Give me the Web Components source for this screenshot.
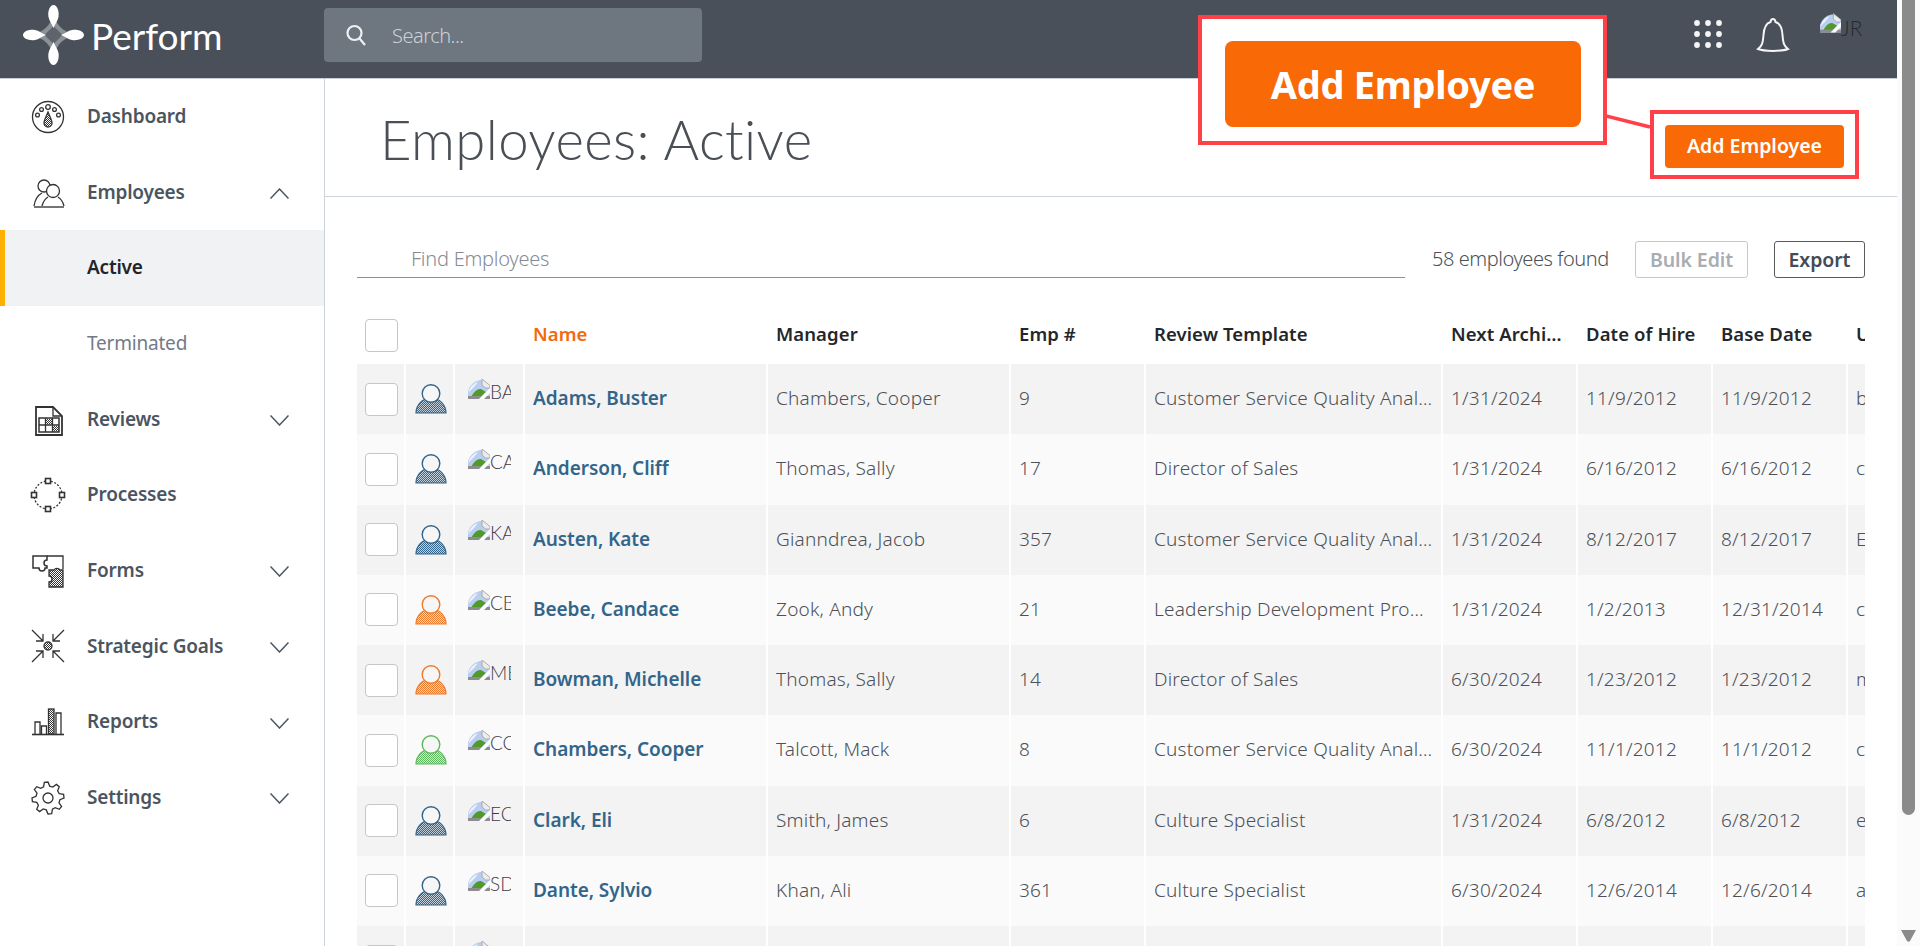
<!DOCTYPE html>
<html lang="en">
<head>
<meta charset="utf-8">
<title>Perform - Employees</title>
<style>
  html, body { margin: 0; height: 946px; overflow: hidden; background: #fff; }
  body { font-family: "Noto Sans", "Open Sans", sans-serif; }
</style>
</head>
<body>
<perform-app></perform-app>
<script>
const gearPath = (cx, cy, rOut, rIn, teeth) => {
  let d = '';
  const step = Math.PI * 2 / teeth;
  for (let i = 0; i < teeth; i++) {
    const a = i * step - step / 2;
    const pts = [[rIn, a + step * 0.02], [rOut, a + step * 0.2], [rOut, a + step * 0.5], [rIn, a + step * 0.68]];
    pts.forEach(([r, t], j) => {
      const x = (cx + r * Math.cos(t)).toFixed(1);
      const y = (cy + r * Math.sin(t)).toFixed(1);
      d += (i === 0 && j === 0 ? 'M' : 'L') + x + ' ' + y + ' ';
    });
  }
  return d + 'Z';
};

// stroke="none" on the pattern cells: they would inherit the icon's stroke otherwise
const dither = (id, color) => `<defs><pattern id="${id}" width="2" height="2" patternUnits="userSpaceOnUse"><rect width="1" height="1" fill="${color}" stroke="none"/><rect x="1" y="1" width="1" height="1" fill="${color}" stroke="none"/></pattern></defs>`;

const NAV_ICONS = {
  dashboard: `${dither('d', '#333')}
    <circle cx="18" cy="18" r="15.5"/>
    <circle cx="18" cy="8" r="2.3"/><circle cx="11.5" cy="10.5" r="1.9"/><circle cx="24.5" cy="10.5" r="1.9"/>
    <circle cx="7.5" cy="16" r="1.9"/><circle cx="28.5" cy="16" r="1.9"/>
    <path d="M18 13 C20 18 22 21 22 24 A4 4 0 0 1 14 24 C14 21 16 18 18 13Z" fill="url(#d)"/>`,
  employees: `
    <circle cx="14" cy="11" r="6"/><circle cx="23" cy="16" r="6.500" fill="#fff"/>
    <path d="M4 31 C5 25 8 20 12 18"/>
    <path d="M12 31 C13 27 15 24 18 22 M28 22 C31 24 33 27 34 31"/>
    <path d="M4 32 H34" stroke-width="1.800" stroke="#666"/>`,
  reviews: `${dither('r', '#333')}
    <g transform="translate(1 1)">
    <path d="M5 4 H22 L31 13 V32 H5Z" stroke-width="1.800"/>
    <path d="M22 4 V13 H31"/>
    <path d="M8 15 H28 V29 H8Z" stroke-width="1.500"/>
    <path d="M8 22 H28 M14.500 15 V29 M21.500 15 V29"/>
    <rect x="15" y="16" width="6" height="5.500" fill="url(#r)" stroke="none"/>
    <rect x="22" y="23" width="6" height="5.500" fill="url(#r)" stroke="none"/>
    </g>`,
  processes: `
    <circle cx="18" cy="18" r="14" stroke-dasharray="2 1.600"/>
    <rect x="15.500" y="1.500" width="5" height="5" fill="#fff" stroke-width="1.600"/>
    <rect x="15.500" y="29.500" width="5" height="5" fill="#fff" stroke-width="1.600"/>
    <rect x="1.500" y="15.500" width="5" height="5" fill="#fff" stroke-width="1.600"/>
    <rect x="29.500" y="15.500" width="5" height="5" fill="#fff" stroke-width="1.600"/>`,
  forms: `${dither('f', '#333')}
    <path d="M3 3 H17 V7 A3 3 0 0 0 17 13 V15 H15 A3 3 0 0 1 9 15 H3Z" stroke-width="1.500"/>
    <path d="M20 3 H33 V16 M17 3 H20"/>
    <path d="M19 17 H24 A3.500 3.500 0 0 1 30 17 H33 V34 H19 V29 A3 3 0 0 0 19 23Z" fill="url(#f)" stroke-width="1.300"/>`,
  goals: `${dither('g', '#333')}
    <g transform="translate(0 -1)">
    <circle cx="18" cy="18" r="4" fill="url(#g)"/>
    <path d="M2 2 L13 13 M13 6 V13 H6 M34 2 L23 13 M23 6 V13 H30 M2 34 L13 23 M6 23 H13 V30 M34 34 L23 23 M30 23 H23 V30"/>
    </g>`,
  reports: `${dither('b', '#333')}
    <path d="M5 30 V18 H10 V30 M11.500 30 V22 H16.500 V30 M26 30 V9 H31 V30"/>
    <rect x="18.500" y="5" width="5.500" height="25" fill="url(#b)"/>
    <path d="M2 30.500 H34" stroke-width="1.600"/>`,
  settings: `<path d="${gearPath(18, 18, 16, 12, 8)}"/><circle cx="18" cy="18" r="5"/>`
};

class AppHeader extends HTMLElement {
  constructor() {
    super();
    this.attachShadow({ mode: 'open' });
  }

  connectedCallback() {
    this.shadowRoot.innerHTML = `
      <style>
        :host { display: flex; align-items: flex-start; height: 79px; box-sizing: border-box; background: #4a5059; border-bottom: 1px solid #c9ced6; position: relative; }
        .logo { display: flex; align-items: center; width: 324px; height: 70px; flex: none; box-sizing: border-box; padding-left: 23px; }
        .logo svg { width: 61px; height: 62px; flex: none; }
        .word { font: 400 37px Lato, sans-serif; color: #fff; margin-left: 7px; }
        .search { width: 378px; height: 54px; margin-top: 8px; background: #6e7780; border-radius: 4px; display: flex; align-items: center; padding-left: 22px; box-sizing: border-box; }
        .search svg { width: 21px; height: 22px; margin-right: 25px; }
        .search span { font: 300 20px "Noto Sans", sans-serif; letter-spacing: -.5px; color: #ccd0d5; }
        .right { margin-left: auto; display: flex; align-items: flex-start; padding-right: 33px; height: 78px; }
        .dots { width: 33px; height: 33px; margin-top: 18px; margin-right: 31px; }
        .bell { width: 34px; height: 36px; margin-top: 17px; margin-right: 30px; }
        .avatar { display: flex; width: 44px; margin-top: 13px; height: 30px; color: #26292d; font: 300 21px Lato, sans-serif; line-height: 30px; }
        broken-img { width: 21px; height: 20px; flex: none; }
      </style>
      <div class="logo">
        <svg viewBox="0 0 61 62">
          <path d="M30.500 9 Q34 27 53 31 Q34 35 30.500 53 Q27 35 8 31 Q27 27 30.500 9Z" fill="#8c9198"/>
          <path d="M30.500 22 L39.500 31 L30.500 40 L21.500 31Z" fill="#5d646c"/>
          <g fill="#fff">
            <path d="M30.500 1 C34 1 36.500 7 35.500 13 C34.800 17 32 20 30.500 24 C29 20 26.200 17 25.500 13 C24.500 7 27 1 30.500 1Z"/>
            <path d="M30.500 61 C34 61 36.500 55 35.500 49 C34.800 45 32 42 30.500 38 C29 42 26.200 45 25.500 49 C24.500 55 27 61 30.500 61Z"/>
            <path d="M0 31 C0 27.500 6 25 12 26 C16 26.700 19 29.500 23 31 C19 32.500 16 35.300 12 36 C6 37 0 34.500 0 31Z"/>
            <path d="M61 31 C61 27.500 55 25 49 26 C45 26.700 42 29.500 38 31 C42 32.500 45 35.300 49 36 C55 37 61 34.500 61 31Z"/>
          </g>
        </svg>
        <span class="word">Perform</span>
      </div>
      <div class="search">
        <svg viewBox="0 0 21 22" fill="none" stroke="#eef0f2" stroke-width="2.200"><circle cx="8.500" cy="9" r="7"/><path d="M13.500 14.500 L19 21"/></svg>
        <span>Search...</span>
      </div>
      <div class="right">
        <svg class="dots" viewBox="0 0 33 33" fill="#f4f5f6">
          ${[5, 16, 27].map(y => [5, 16, 27].map(x => `<circle cx="${x}" cy="${y}" r="2.900"/>`).join('')).join('')}
        </svg>
        <svg class="bell" viewBox="0 0 34 36" fill="none" stroke="#f4f5f6" stroke-width="2">
          <path d="M2 32 C6 29 7 26 7.500 18 C8 10 11 6 14.500 5 C15 1 19 1 19.500 5 C23 6 26 10 26.500 18 C27 26 28 29 32 32 C26 34.500 8 34.500 2 32Z"/>
        </svg>
        <div class="avatar"><broken-img></broken-img><span>JR</span></div>
      </div>
    `;
  }
}

class BrokenImg extends HTMLElement {
  constructor() {
    super();
    this.attachShadow({ mode: 'open' });
  }

  connectedCallback() {
    this.shadowRoot.innerHTML = `
      <style>
        :host { display: inline-block; line-height: 0; }
        svg { width: 100%; height: 100%; display: block; }
      </style>
      <svg viewBox="0 0 22 20">
        <path d="M0 20 V12 Q3 3 12 1 H15 L22 7 V20Z" fill="#b9cdf0"/>
        <path d="M0 14 Q3 5 10 3 L6 8 Z" fill="#eef3fb"/>
        <path d="M14 0 L22 6.500 V9 H17.500 L14 6Z" fill="#ececec" stroke="#9d9d9d" stroke-width=".8"/>
        <path d="M3 18 Q8 9 13 10 L18 13 L13 18Z" fill="#4f9a2a"/>
        <path d="M0 17 H22 V20 H0Z" fill="#8d8d8d"/>
        <path d="M22 9 L11 20 H16 L22 14Z" fill="#fff"/>
      </svg>
    `;
  }
}

class NavItem extends HTMLElement {
  constructor() {
    super();
    this.attachShadow({ mode: 'open' });
  }

  connectedCallback() {
    const icon = this.getAttribute('icon');
    const chevron = this.getAttribute('chevron');
    this.shadowRoot.innerHTML = `
      <style>
        :host { display: flex; align-items: center; height: 75.700px; box-sizing: border-box; padding: 0 0 2px 30px; position: relative;
                font: 600 19px "Noto Sans", sans-serif; letter-spacing: -.2px; color: #4b5560; }
        :host([active]) { background: #f1f2f4; color: #20252a; border-left: 5px solid #ffb000; padding-left: 25px; }
        :host([muted]) { color: #717b87; font-weight: 400; }
        .ico { width: 36px; height: 36px; flex: none; margin: 2px 21px 0 0; fill: none; stroke: #333; stroke-width: 1.300; }
        .spacer { width: 36px; flex: none; margin-right: 21px; }
        .chev { position: absolute; left: 270px; top: 33px; width: 19px; height: 11px; fill: none; stroke: #4b5560; stroke-width: 1.500; }
      </style>
      ${icon ? `<svg class="ico" viewBox="0 0 36 36">${NAV_ICONS[icon]}</svg>` : '<span class="spacer"></span>'}
      <slot></slot>
      ${chevron ? `<svg class="chev" viewBox="0 0 19 11"><path d="${chevron === 'up' ? 'M.5 10.500 L9.500 1 L18.500 10.500' : 'M.5 .5 L9.500 10 L18.500 .5'}"/></svg>` : ''}
    `;
  }
}

class SideNav extends HTMLElement {
  constructor() {
    super();
    this.attachShadow({ mode: 'open' });
  }

  connectedCallback() {
    this.shadowRoot.innerHTML = `
      <style>
        :host { display: block; width: 325px; flex: none; box-sizing: border-box; border-right: 1px solid #cdd3dd; background: #fff; }
      </style>
      <nav-item icon="dashboard">Dashboard</nav-item>
      <nav-item icon="employees" chevron="up">Employees</nav-item>
      <nav-item active>Active</nav-item>
      <nav-item muted>Terminated</nav-item>
      <nav-item icon="reviews" chevron="down">Reviews</nav-item>
      <nav-item icon="processes">Processes</nav-item>
      <nav-item icon="forms" chevron="down">Forms</nav-item>
      <nav-item icon="goals" chevron="down">Strategic Goals</nav-item>
      <nav-item icon="reports" chevron="down">Reports</nav-item>
      <nav-item icon="settings" chevron="down">Settings</nav-item>
    `;
  }
}

class PageHead extends HTMLElement {
  constructor() {
    super();
    this.attachShadow({ mode: 'open' });
  }

  connectedCallback() {
    this.shadowRoot.innerHTML = `
      <style>
        :host { display: flex; align-items: center; height: 118px; box-sizing: border-box; border-bottom: 1px solid #cdd3dd; padding: 0 53px 0 55px; }
        h1 { margin: 2px 0 0; font: 300 54.500px Lato, sans-serif; color: #4a4f55; letter-spacing: .4px; }
        button { margin-left: auto; margin-top: 17px; width: 179px; height: 43px; border: 0; border-radius: 4px; background: #f96a06; color: #fff; font: 600 19.500px "Noto Sans", sans-serif; padding: 0 0 2px; }
      </style>
      <h1>Employees: Active</h1>
      <button>Add Employee</button>
    `;
  }
}

class EmpToolbar extends HTMLElement {
  constructor() {
    super();
    this.attachShadow({ mode: 'open' });
  }

  connectedCallback() {
    this.shadowRoot.innerHTML = `
      <style>
        :host { display: flex; align-items: flex-start; height: 82px; box-sizing: border-box; padding: 44px 32px 0; font: 300 20px "Noto Sans", sans-serif; }
        .find { width: 1048px; height: 37px; box-sizing: border-box; border-bottom: 1px solid #8f8f8f; padding-left: 54px; color: #868c93; line-height: 36px; flex: none; letter-spacing: -.25px; }
        .count { margin-left: 27px; color: #4c5159; line-height: 36px; width: 203px; flex: none; white-space: nowrap; letter-spacing: -.45px; }
        button { height: 37px; box-sizing: border-box; background: #fff; border-radius: 3px; font: 600 19.500px "Noto Sans", sans-serif; letter-spacing: -.1px; padding: 0; }
        .bulk { width: 113px; border: 1px solid #c8c8c8; color: #a9adb2; margin-right: 26px; }
        .export { width: 91px; border: 1px solid #5a5a5a; color: #454b52; }
      </style>
      <div class="find">Find Employees</div>
      <div class="count">58 employees found</div>
      <button class="bulk">Bulk Edit</button>
      <button class="export">Export</button>
    `;
  }
}

class PersonIcon extends HTMLElement {
  constructor() {
    super();
    this.attachShadow({ mode: 'open' });
  }

  connectedCallback() {
    const color = this.getAttribute('color') || '#33658a';
    this.shadowRoot.innerHTML = `
      <style>
        :host { display: block; width: 32px; height: 30px; line-height: 0; }
      </style>
      <svg width="32" height="30" viewBox="0 0 32 30">
        ${dither('p', color)}
        <path d="M1 29 A15 15 0 0 1 31 29Z" fill="${color}" fill-opacity=".25"/>
        <path d="M1 29 A15 15 0 0 1 31 29Z" fill="url(#p)" stroke="${color}" stroke-width="1.200"/>
        <circle cx="16" cy="9.500" r="8.800" fill="#f6f6f6" stroke="${color}" stroke-width="1.400"/>
      </svg>
    `;
  }
}

class EmpRow extends HTMLElement {
  constructor() {
    super();
    this.attachShadow({ mode: 'open' });
  }

  setRow(row) {
    this.row = row;
    this.render();
  }

  render() {
    const r = this.row;
    this.shadowRoot.innerHTML = `
      <style>
        :host { display: grid; grid-template-columns: var(--cols); height: 70.250px; background: var(--row-bg); font: 300 19px "Noto Sans", sans-serif; letter-spacing: .2px; color: #4c5057; }
        .c { box-sizing: border-box; border-right: 2px solid #fff; padding: 0 8px 2px; display: flex; align-items: center; min-width: 0; overflow: hidden; white-space: nowrap; }
        .c span { overflow: hidden; text-overflow: ellipsis; }
        .c:last-child { border-right: 0; padding-right: 0; }
        .c.box { padding-bottom: 0; }
        .chk { width: 33px; height: 33px; box-sizing: border-box; border: 1px solid #c6c6c6; border-radius: 4px; background: #fff; flex: none; }
        .name { font-weight: 600; color: #33658a; letter-spacing: -.05px; }
        .pic { padding: 15px 0 0 13px; align-items: flex-start; }
        .alt { width: 43px; height: 30px; overflow: hidden; display: flex; font: 300 19px Lato, sans-serif; color: #3f3a4a; line-height: 26px; letter-spacing: 0; }
        broken-img { width: 22px; height: 20px; flex: none; }
        .person { padding: 20px 0 0 9px; align-items: flex-start; }
      </style>
      <div class="c box"><div class="chk"></div></div>
      <div class="c person"><person-icon color="${r.color}"></person-icon></div>
      <div class="c pic"><div class="alt"><broken-img></broken-img>${r.initials}</div></div>
      <div class="c name"><span>${r.name}</span></div>
      <div class="c"><span>${r.manager}</span></div>
      <div class="c"><span>${r.emp}</span></div>
      <div class="c"><span>${r.template}</span></div>
      <div class="c"><span>${r.archive}</span></div>
      <div class="c"><span>${r.hire}</span></div>
      <div class="c"><span>${r.base}</span></div>
      <div class="c"><span style="text-overflow:clip">${r.user}</span></div>
    `;
  }
}

class EmpTable extends HTMLElement {
  constructor() {
    super();
    this.attachShadow({ mode: 'open' });
    this.rows = [];
  }

  connectedCallback() {
    this.render();
  }

  setRows(rows) {
    this.rows = rows;
    this.render();
  }

  render() {
    this.shadowRoot.innerHTML = `
      <style>
        :host { display: block; margin: 0 32px; --cols: 49px 49px 70px 243px 243px 135px 297px 135px 135px 135px 1fr; font: 600 18.500px "Noto Sans", sans-serif; letter-spacing: .1px; color: #23272b; }
        .head { display: grid; grid-template-columns: var(--cols); height: 85px; box-sizing: border-box; padding-top: 40px; }
        .head div { padding: 0 8px; height: 33px; line-height: 29px; white-space: nowrap; overflow: hidden; text-overflow: ellipsis; min-width: 0; }
        .head div:last-child { padding-right: 0; text-overflow: clip; }
        .head .sel { padding: 0; }
        .chk { width: 33px; height: 33px; box-sizing: border-box; border: 1px solid #c6c6c6; border-radius: 4px; background: #fff; margin-left: 8px; }
        .sorted { color: #f26a0c; }
        emp-row:nth-child(odd) { --row-bg: #f3f3f3; }
        emp-row:nth-child(even) { --row-bg: #fafafa; }
      </style>
      <div class="head">
        <div class="sel"><div class="chk"></div></div><div></div><div></div>
        <div class="sorted">Name</div><div>Manager</div><div>Emp #</div><div>Review Template</div>
        <div>Next Archive Date</div><div>Date of Hire</div><div>Base Date</div><div>U</div>
      </div>
      <div class="body"></div>
    `;
    const body = this.shadowRoot.querySelector('.body');
    this.rows.forEach(row => {
      const el = document.createElement('emp-row');
      el.setRow(row);
      body.appendChild(el);
    });
  }
}

class CalloutNote extends HTMLElement {
  constructor() {
    super();
    this.attachShadow({ mode: 'open' });
  }

  connectedCallback() {
    this.shadowRoot.innerHTML = `
      <style>
        :host { display: block; position: absolute; left: 0; top: 0; width: 0; height: 0; }
        .zoom { position: absolute; left: 1198px; top: 15px; width: 409px; height: 130px; box-sizing: border-box; border: 4px solid #ff4049; background: #fff; padding: 22px 0 0 23px; }
        .zoom div { width: 356px; height: 86px; border-radius: 8px; background: #f96a06; color: #fff; font: 700 38px "Noto Sans", sans-serif; letter-spacing: -.3px; display: flex; align-items: center; justify-content: center; }
        .mark { position: absolute; left: 1650px; top: 110px; width: 209px; height: 69px; box-sizing: border-box; border: 4px solid #ff4049; }
        svg { position: absolute; left: 1606px; top: 114px; }
      </style>
      <svg width="46" height="16"><path d="M0 2 L44 13" stroke="#ff4049" stroke-width="3.500"/></svg>
      <div class="mark"></div>
      <div class="zoom"><div>Add Employee</div></div>
    `;
  }
}

class PageScrollbar extends HTMLElement {
  constructor() {
    super();
    this.attachShadow({ mode: 'open' });
  }

  connectedCallback() {
    this.shadowRoot.innerHTML = `
      <style>
        :host { display: block; position: relative; background: #fbfbfb; height: 946px; }
        .thumb { position: absolute; left: 5px; top: 0; width: 13px; height: 815px; background: #8b8b8b; border-radius: 0 0 7px 7px; }
        svg { position: absolute; left: 4px; top: 930px; }
      </style>
      <div class="thumb"></div>
      <svg width="15" height="12"><path d="M0 0 H15 L9 11 Q7.500 12.500 6 11Z" fill="#8b8b8b"/></svg>
    `;
  }
}

class PerformApp extends HTMLElement {
  constructor() {
    super();
    this.attachShadow({ mode: 'open' });
  }

  connectedCallback() {
    this.shadowRoot.innerHTML = `
      <style>
        :host { display: grid; grid-template-columns: 1897px 23px; width: 1920px; height: 946px; overflow: hidden; position: relative; background: #fff; }
        .page { display: flex; flex-direction: column; height: 946px; overflow: hidden; }
        .below { display: flex; flex: 1; min-height: 0; }
        main { flex: 1; min-width: 0; overflow: hidden; }
      </style>
      <div class="page">
        <app-header></app-header>
        <div class="below">
          <side-nav></side-nav>
          <main>
            <page-head></page-head>
            <emp-toolbar></emp-toolbar>
            <emp-table></emp-table>
          </main>
        </div>
      </div>
      <page-scrollbar></page-scrollbar>
      <callout-note></callout-note>
    `;
    const blue = '#33658a', orange = '#ee7a2b', green = '#5fb760';
    const csq = 'Customer Service Quality Analyst';
    this.shadowRoot.querySelector('emp-table').setRows([
      { color: blue, initials: 'BA', name: 'Adams, Buster', manager: 'Chambers, Cooper', emp: '9', template: csq, archive: '1/31/2024', hire: '11/9/2012', base: '11/9/2012', user: 'b' },
      { color: blue, initials: 'CA', name: 'Anderson, Cliff', manager: 'Thomas, Sally', emp: '17', template: 'Director of Sales', archive: '1/31/2024', hire: '6/16/2012', base: '6/16/2012', user: 'c' },
      { color: blue, initials: 'KA', name: 'Austen, Kate', manager: 'Gianndrea, Jacob', emp: '357', template: csq, archive: '1/31/2024', hire: '8/12/2017', base: '8/12/2017', user: 'E' },
      { color: orange, initials: 'CB', name: 'Beebe, Candace', manager: 'Zook, Andy', emp: '21', template: 'Leadership Development Program', archive: '1/31/2024', hire: '1/2/2013', base: '12/31/2014', user: 'c' },
      { color: orange, initials: 'MB', name: 'Bowman, Michelle', manager: 'Thomas, Sally', emp: '14', template: 'Director of Sales', archive: '6/30/2024', hire: '1/23/2012', base: '1/23/2012', user: 'm' },
      { color: green, initials: 'CC', name: 'Chambers, Cooper', manager: 'Talcott, Mack', emp: '8', template: csq, archive: '6/30/2024', hire: '11/1/2012', base: '11/1/2012', user: 'c' },
      { color: blue, initials: 'EC', name: 'Clark, Eli', manager: 'Smith, James', emp: '6', template: 'Culture Specialist', archive: '1/31/2024', hire: '6/8/2012', base: '6/8/2012', user: 'e' },
      { color: blue, initials: 'SD', name: 'Dante, Sylvio', manager: 'Khan, Ali', emp: '361', template: 'Culture Specialist', archive: '6/30/2024', hire: '12/6/2014', base: '12/6/2014', user: 'a' },
      { color: blue, initials: '', name: '', manager: '', emp: '', template: '', archive: '', hire: '', base: '', user: '' }
    ]);
  }
}

customElements.define('broken-img', BrokenImg);
customElements.define('app-header', AppHeader);
customElements.define('nav-item', NavItem);
customElements.define('side-nav', SideNav);
customElements.define('page-head', PageHead);
customElements.define('emp-toolbar', EmpToolbar);
customElements.define('person-icon', PersonIcon);
customElements.define('emp-row', EmpRow);
customElements.define('emp-table', EmpTable);
customElements.define('callout-note', CalloutNote);
customElements.define('page-scrollbar', PageScrollbar);
customElements.define('perform-app', PerformApp);
</script>
</body>
</html>
